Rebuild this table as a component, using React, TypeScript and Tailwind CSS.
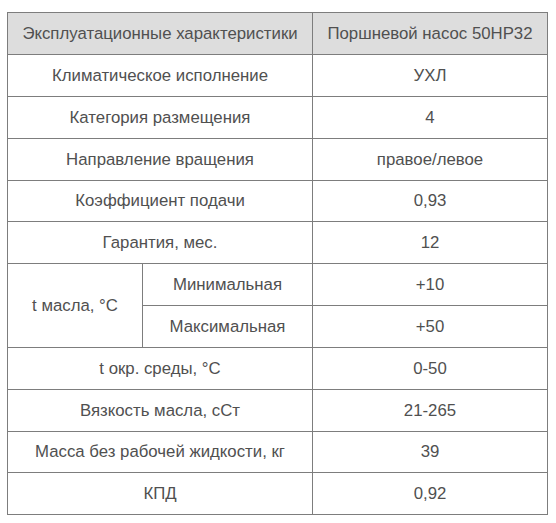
import React from "react";

const rows: { h: string; label: string; value: string }[] = [
  { h: "h-[41px]", label: "Климатическое исполнение", value: "УХЛ" },
  { h: "h-[41px]", label: "Категория размещения", value: "4" },
  { h: "h-[41px]", label: "Направление вращения", value: "правое/левое" },
  { h: "h-[40px]", label: "Коэффициент подачи", value: "0,93" },
  { h: "h-[41px]", label: "Гарантия, мес.", value: "12" },
];

const rows2: { h: string; label: string; value: string }[] = [
  { h: "h-[41px]", label: "t окр. среды, °С", value: "0-50" },
  { h: "h-[41px]", label: "Вязкость масла, сСт", value: "21-265" },
  { h: "h-[40px]", label: "Масса без рабочей жидкости, кг", value: "39" },
  { h: "h-[41px]", label: "КПД", value: "0,92" },
];

const cell = "bg-white flex items-center justify-center text-center";

export default function App() {
  return (
    <div className="w-[556px] h-[523px] bg-white pt-[12px] pl-[7px]" style={{ fontFamily: '"Liberation Sans", Arial, sans-serif' }}>
      <div className="grid grid-cols-[134px_169px_234px] gap-px p-px bg-[#7d7d7d] w-[541px] text-[16.8px] text-[#505050] whitespace-nowrap">
        <div className={`col-span-2 h-[41px] bg-[#dddddd] flex items-center justify-center`}>Эксплуатационные характеристики</div>
        <div className="h-[41px] bg-[#dddddd] flex items-center justify-center">Поршневой насос 50HP32</div>
        {rows.map((r) => (
          <React.Fragment key={r.label}>
            <div className={`col-span-2 ${r.h} ${cell}`}>{r.label}</div>
            <div className={`${r.h} ${cell}`}>{r.value}</div>
          </React.Fragment>
        ))}
        <div className={`row-span-2 ${cell}`}>t масла, °С</div>
        <div className={`h-[41px] ${cell}`}>Минимальная</div>
        <div className={`h-[41px] ${cell}`}>+10</div>
        <div className={`h-[41px] ${cell}`}>Максимальная</div>
        <div className={`h-[41px] ${cell}`}>+50</div>
        {rows2.map((r) => (
          <React.Fragment key={r.label}>
            <div className={`col-span-2 ${r.h} ${cell}`}>{r.label}</div>
            <div className={`${r.h} ${cell}`}>{r.value}</div>
          </React.Fragment>
        ))}
      </div>
    </div>
  );
}
